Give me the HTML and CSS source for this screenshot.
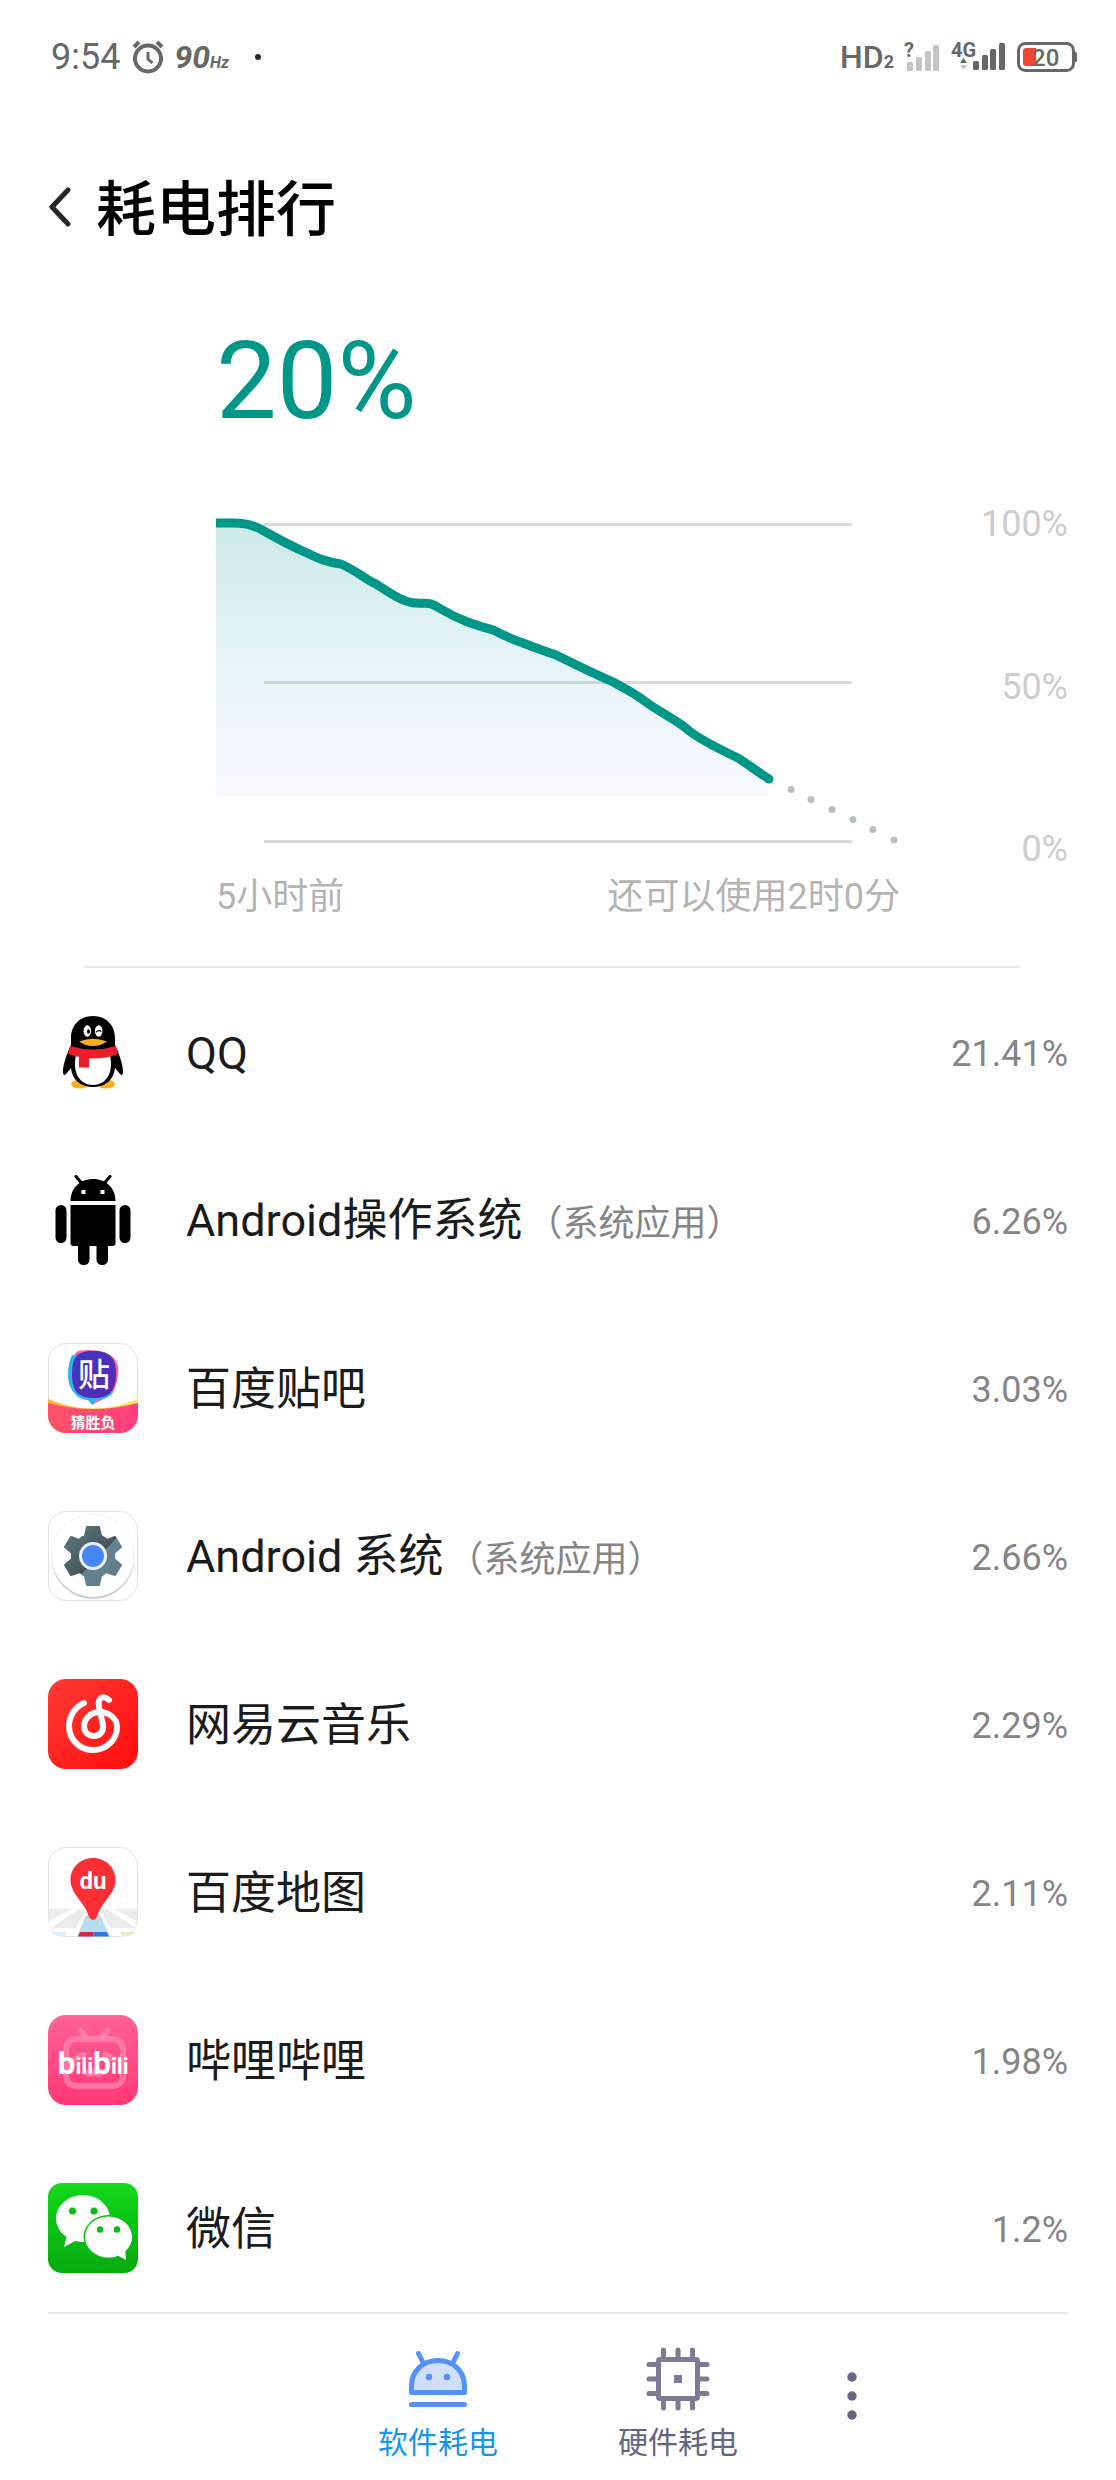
FILE: index.html
```html
<!DOCTYPE html>
<html lang="zh-CN">
<head>
<meta charset="utf-8">
<meta name="viewport" content="width=device-width, initial-scale=1">
<title>耗电排行</title>
<link rel="stylesheet" href="styles.css">
</head>
<body>
<div class="statusbar">
  <div class="status-group status-left">
    <span class="clock">9:54</span>
    <svg class="alarm" width="32" height="34" viewBox="0 0 32 34" aria-hidden="true">
      <g fill="none" stroke="#666865" stroke-linecap="butt">
        <circle cx="16" cy="18.500" r="13" stroke-width="4"/>
        <path d="M16 12v7l4.500 4" stroke-width="3"/>
        <path d="M2 7l5-5M30 7l-5-5" stroke-width="4"/>
      </g>
    </svg>
    <span class="rate">90<small class="rate-unit">Hz</small></span>
    <span class="notice-dot"></span>
  </div>
  <div class="status-group status-right">
    <span class="hd">HD<small class="hd-sim">2</small></span>
    <svg width="38" height="44" viewBox="-2 -6 38 44" aria-hidden="true">
      <g fill="#c5c3c7"><rect x="3" y="21" width="6" height="9" rx="1.500"/><rect x="12" y="16" width="6" height="14" rx="1.500"/><rect x="21" y="10" width="6" height="20" rx="1.500"/><rect x="29" y="4" width="6" height="26" rx="1.500"/></g>
      <text class="glyph-q" x="0" y="16">?</text>
    </svg>
    <svg class="sim2" width="56" height="44" viewBox="-2 -6 56 44" aria-hidden="true">
      <g fill="#666865"><rect x="22" y="20" width="6" height="9" rx="1.500"/><rect x="31" y="14" width="6" height="15" rx="1.500"/><rect x="39" y="8" width="6" height="21" rx="1.500"/><rect x="48" y="2" width="6" height="27" rx="1.500"/><path d="M9 22l3.500-5 3.500 5z"/></g>
      <path d="M9 24l3.500 5 3.500-5z" fill="#c5c3c7"/>
      <text class="glyph-net" x="0" y="16">4G</text>
    </svg>
    <svg class="battery" width="60" height="30" viewBox="0 0 60 30" role="img" aria-label="电量 20%">
      <rect x="1.500" y="1.500" width="55" height="27" rx="7" fill="none" stroke="#666865" stroke-width="3"/>
      <path d="M57 10h1.500q1.500 0 1.500 1.500v7q0 1.500-1.500 1.500H57z" fill="#666865"/>
      <path d="M9 6h10v18H9q-3 0-3-3V9q0-3 3-3z" fill="#f04535"/>
      <text class="glyph-batt" x="15" y="24">20</text>
    </svg>
  </div>
</div>

<header class="titlebar">
  <button class="back" type="button" aria-label="返回">
    <svg width="24" height="40" viewBox="0 0 24 40" aria-hidden="true"><path d="M20 3L4 20l16 17" fill="none" stroke="#252826" stroke-width="5" stroke-linejoin="round" stroke-linecap="round"/></svg>
  </button>
  <h1 class="title">耗电排行</h1>
</header>

<main>
  <section class="usage">
    <p class="level">20%</p>
    <div class="chart">
      <svg class="plot" viewBox="216 501 684 367" role="img" aria-label="电量变化曲线">
        <defs>
          <linearGradient id="fade" x1="0" y1="0" x2="0" y2="1">
            <stop offset="0" stop-color="#009688" stop-opacity=".2"/>
            <stop offset=".45" stop-color="#1a9fb0" stop-opacity=".12"/>
            <stop offset="1" stop-color="#4a90ff" stop-opacity=".04"/>
          </linearGradient>
        </defs>
        <g stroke="#dbdbdc" stroke-width="3"><path d="M264 524.500H852M264 682.500H852M264 841.500H852"/></g>
        <path fill="url(#fade)" d="M216 523H234C252 523 262 530 264 531C287 544 293 547 305 552C319 559 327 562 341 564C359 572 366 580 376 584C394 596 406 603 416 603C428 604 431 602 439 608C461 621 476 625 493 630C507 637 514 640 523 643C538 649 545 651 556 655C580 667 595 674 613 682C630 691 637 695 646 702C658 711 676 720 687 729C697 738 719 749 738 758L768 779V796H216Z"/>
        <path fill="none" stroke="#009688" stroke-width="9" d="M216 523H234C252 523 262 530 264 531C287 544 293 547 305 552C319 559 327 562 341 564C359 572 366 580 376 584C394 596 406 603 416 603C428 604 431 602 439 608C461 621 476 625 493 630C507 637 514 640 523 643C538 649 545 651 556 655C580 667 595 674 613 682C630 691 637 695 646 702C658 711 676 720 687 729C697 738 719 749 738 758C749 765 758 772 769 779"/>
        <circle cx="769" cy="779" r="4.500" fill="#009688"/>
        <g fill="#b4bfc6"><circle cx="791" cy="789.500" r="3.500"/><circle cx="811" cy="799.500" r="3.500"/><circle cx="832" cy="809.500" r="3.500"/><circle cx="853" cy="819.500" r="3.500"/><circle cx="873" cy="829.500" r="3.500"/><circle cx="894" cy="840" r="3.500"/></g>
      </svg>
      <div class="scale"><span>100%</span><span>50%</span><span>0%</span></div>
      <div class="times"><span>5小时前</span><span>还可以使用2时0分</span></div>
    </div>
  </section>

  <ul class="apps">
    <li class="app">
      <svg class="app-icon" viewBox="0 0 90 90" aria-hidden="true">
        <ellipse cx="32" cy="77" rx="9" ry="4.500" fill="#fbb01b"/><ellipse cx="58" cy="77" rx="9" ry="4.500" fill="#fbb01b"/>
        <path d="M45 9C58 9 67 18 67 31V38C70 44 75 57 75 64Q75 70 72 67L67 61C66 73 57 80 45 80S24 73 23 61L18 67Q15 70 15 64C15 57 20 44 23 38V31C23 18 32 9 45 9Z"/>
        <path d="M28 48Q45 53 62 48C66 66 58 78 45 78S24 66 28 48Z" fill="#fff"/>
        <path d="M22 39Q45 46 68 39L70 47Q58 52 41 51.500V60.500H31V50L20 47Z" fill="#ed1c2b"/>
        <ellipse cx="39.300" cy="24" rx="3.800" ry="5.800" fill="#fff"/><ellipse cx="50.700" cy="24" rx="3.800" ry="5.800" fill="#fff"/>
        <ellipse cx="40.500" cy="24.500" rx="1.500" ry="2.200"/><path d="M48 25q3-2.500 5.500-.5" fill="none" stroke="#000" stroke-width="1.200"/>
        <path d="M31 34.500Q45 29 59 34.500Q52 39 45 39T31 34.500Z" fill="#fbb01b"/>
      </svg>
      <span class="app-name">QQ</span><span class="app-share">21.41%</span>
    </li>
    <li class="app">
      <svg class="app-icon" viewBox="0 0 90 90" aria-hidden="true">
        <path d="M22.500 26C22.500 13 32 4 45 4S67.500 13 67.500 26Z"/><path d="M28 1.500l6 7M62 1.500l-6 7" stroke="#000" stroke-width="3" stroke-linecap="round"/>
        <path d="M22.500 30h45v38q0 3-3 3h-39q-3 0-3-3z"/>
        <rect x="7.500" y="30" width="11" height="38" rx="5.500"/><rect x="71.500" y="30" width="11" height="38" rx="5.500"/>
        <rect x="30" y="60" width="11.500" height="30" rx="5.500"/><rect x="48.500" y="60" width="11.500" height="30" rx="5.500"/>
        <path fill="#fff" d="M33.500 15h4v4h-4zM52.500 15h4v4h-4z"/>
      </svg>
      <span class="app-name">Android操作系统<small class="app-kind">（系统应用）</small></span><span class="app-share">6.26%</span>
    </li>
    <li class="app">
      <svg class="app-icon" viewBox="0 0 90 90" aria-hidden="true">
        <defs>
          <linearGradient id="band"><stop offset="0" stop-color="#ff5367"/><stop offset="1" stop-color="#ff3f7c"/></linearGradient>
          <linearGradient id="rim"><stop offset="0" stop-color="#ffae32"/><stop offset=".5" stop-color="#ffcf50"/><stop offset="1" stop-color="#ffe45c"/></linearGradient>
          <linearGradient id="bubble" x1="0" y1="0" x2="1" y2="1"><stop offset="0" stop-color="#3e35c8"/><stop offset="1" stop-color="#5a2ab0"/></linearGradient>
          <clipPath id="tile"><rect width="90" height="90" rx="18"/></clipPath>
        </defs>
        <rect class="tile-edge" x=".5" y=".5" width="89" height="89" rx="18"/>
        <path d="M30 8Q50 5 62 12Q72 18 70 32T63 52L44 62L50 56Q22 57 21 36T30 8Z" fill="#ff5c9a"/>
        <path d="M24 12Q20 20 20 32T28 52Q33 57 40 57L44 62L49 57Q60 56 65 50L40 16Z" fill="#2bb4f2"/>
        <path d="M45 8C62 8 68 15 68 31S62 55 46 55S24 48 24 31S29 8 45 8Z" fill="url(#bubble)"/>
        <g clip-path="url(#tile)"><path d="M0 56Q45 75 90 56V90H0Z" fill="url(#rim)"/><path d="M0 60Q45 72 90 60V90H0Z" fill="url(#band)"/></g>
        <text class="logo-tie" x="46" y="43">贴</text><text class="logo-band" x="45" y="85">猜胜负</text>
      </svg>
      <span class="app-name">百度贴吧</span><span class="app-share">3.03%</span>
    </li>
    <li class="app">
      <svg class="app-icon" viewBox="0 0 90 90" aria-hidden="true">
        <defs>
          <linearGradient id="steel" x1="0" y1="0" x2="1" y2="1"><stop offset="0" stop-color="#607b80"/><stop offset=".55" stop-color="#435559"/><stop offset=".56" stop-color="#668390"/><stop offset="1" stop-color="#5c7887"/></linearGradient>
        </defs>
        <rect class="tile-edge" x=".5" y=".5" width="89" height="89" rx="18"/>
        <circle cx="45" cy="46.500" r="41.500" fill="#cbc4cb"/><circle cx="45" cy="44.500" r="41.500" fill="#fff" stroke="#eee" stroke-width=".7"/>
        <path fill="url(#steel)" stroke="url(#steel)" stroke-width="2" stroke-linejoin="round" d="M39 16H51L53 25Q57 27 59 29L67 26L73 36L66 42V48L73 54L67 64L58 61Q56 63 53 65L51 74H39L37 65Q34 63 32 61L23 64L17 54L24 48V42L17 36L23 26L31 29Q34 26 37 25Z"/>
        <circle cx="45" cy="45" r="12.500" fill="#4587f5" stroke="#e9f0fb" stroke-width="3"/>
      </svg>
      <span class="app-name">Android 系统<small class="app-kind">（系统应用）</small></span><span class="app-share">2.66%</span>
    </li>
    <li class="app">
      <svg class="app-icon" viewBox="0 0 90 90" aria-hidden="true">
        <defs><linearGradient id="netease" x1="0" y1="0" x2="1" y2="1"><stop offset="0" stop-color="#ff3a34"/><stop offset="1" stop-color="#ff0d0d"/></linearGradient></defs>
        <rect width="90" height="90" rx="18" fill="url(#netease)"/>
        <path d="M36 24C27 28 21 37 21 47C21 61 32 71 45 71S69 61 69 48C69 39 60 32 50 33C42 34 36 40 36 47C36 53 40 57 46 57S56 52 55 46L51 28C49 18 56 16 61 21" fill="none" stroke="#fff" stroke-width="6" stroke-linecap="round" stroke-linejoin="round"/>
      </svg>
      <span class="app-name">网易云音乐</span><span class="app-share">2.29%</span>
    </li>
    <li class="app">
      <svg class="app-icon" viewBox="0 0 90 90" aria-hidden="true">
        <rect class="tile-edge" x=".5" y=".5" width="89" height="89" rx="18"/>
        <path d="M1 62H24L1 74ZM31 62H38L28 81H3ZM89 62H66L89 74ZM59 62H52L62 81H87Z" fill="#ebebeb"/>
        <path d="M3 85H19L17 89H12Q6 89 3 85Z" fill="#d9eff8"/><path d="M72 85H87Q84 89 78 89H74Z" fill="#e3efc9"/>
        <path d="M38 68H52L62 89.500H29Z" fill="#b7dded"/><path d="M32 85H45.500V89.500H30Z" fill="#d22845"/><path d="M45.500 85H59L61 89.500H45.500Z" fill="#2e79e4"/>
        <path d="M45 11C58 11 67.500 21 67.500 33C67.500 47 53 55 49 70Q45 76 41 70C37 55 22.500 47 22.500 33C22.500 21 32 11 45 11Z" fill="#f92f33"/>
        <text class="logo-du" x="45" y="42">du</text>
      </svg>
      <span class="app-name">百度地图</span><span class="app-share">2.11%</span>
    </li>
    <li class="app">
      <svg class="app-icon" viewBox="0 0 90 90" aria-hidden="true">
        <defs><linearGradient id="bili" x1="0" y1="0" x2="0" y2="1"><stop offset="0" stop-color="#ff6296"/><stop offset="1" stop-color="#ff3874"/></linearGradient></defs>
        <rect width="90" height="90" rx="18" fill="url(#bili)"/>
        <g fill="none" stroke="#ff8fb3" stroke-opacity=".65" stroke-width="6" stroke-linecap="round"><rect x="18" y="24" width="57" height="47" rx="10"/><path d="M33 16l4 5M59 16l-4 5M27 44l9-4M57 40l9 4M38 57q4 4 8 0q4 4 8 0"/></g>
        <text class="logo-bili" x="45" y="59"><tspan class="logo-b">b</tspan>ili<tspan class="logo-b">b</tspan>ili</text>
      </svg>
      <span class="app-name">哔哩哔哩</span><span class="app-share">1.98%</span>
    </li>
    <li class="app">
      <svg class="app-icon" viewBox="0 0 90 90" aria-hidden="true">
        <defs><linearGradient id="wechat" x1="0" y1="0" x2="0" y2="1"><stop offset="0" stop-color="#14d81c"/><stop offset="1" stop-color="#04aa0c"/></linearGradient></defs>
        <rect width="90" height="90" rx="14" fill="url(#wechat)"/>
        <ellipse cx="35" cy="35.500" rx="27" ry="23.500" fill="#fff"/><path d="M19 52L16 64L29 57Z" fill="#fff"/>
        <ellipse cx="60.500" cy="54" rx="25" ry="22" fill="#0abf12"/><ellipse cx="60.500" cy="54" rx="23.500" ry="20.500" fill="#fff"/><path d="M77 65L78 77L67 71Z" fill="#fff"/>
        <g fill="#0cbd14"><circle cx="24.500" cy="28" r="3.600"/><circle cx="46" cy="28" r="3.600"/><circle cx="52" cy="46.500" r="3.200"/><circle cx="69" cy="46.500" r="3.200"/></g>
      </svg>
      <span class="app-name">微信</span><span class="app-share">1.2%</span>
    </li>
  </ul>
</main>

<nav class="tabs">
  <button class="tab tab-active" type="button" aria-current="page">
    <svg width="64" height="64" viewBox="0 0 64 64" aria-hidden="true">
      <path d="M5.500 45.500V39C5.500 24 17 13.500 32 13.500S58.500 24 58.500 39V45.500Z" fill="#d0dffe" stroke="#5591f6" stroke-width="5" stroke-linejoin="round"/>
      <path d="M12.500 6.500l5 10M51.500 6.500l-5 10M5.500 57.500h53" stroke="#5591f6" stroke-width="5" stroke-linecap="round"/>
      <g fill="#5591f6"><circle cx="23" cy="30" r="3.200"/><circle cx="41" cy="30" r="3.200"/></g>
    </svg>
    <span>软件耗电</span>
  </button>
  <button class="tab" type="button">
    <svg width="64" height="64" viewBox="0 0 64 64" aria-hidden="true">
      <rect x="12.500" y="12.500" width="39" height="39" rx="1.500" fill="none" stroke="#7c7d94" stroke-width="5"/>
      <path d="M17.500 3v8M32 3v8M46.500 3v8M17.500 53v8M32 53v8M46.500 53v8M3 17.500h8M3 32h8M3 46.500h8M53 17.500h8M53 32h8M53 46.500h8" stroke="#7c7d94" stroke-width="5" stroke-linecap="round"/>
      <rect x="28" y="28" width="8" height="8" fill="#7c7d94"/>
    </svg>
    <span>硬件耗电</span>
  </button>
  <button class="tab more" type="button" aria-label="更多">
    <svg width="12" height="50" viewBox="0 0 12 50" aria-hidden="true"><g fill="#656682"><circle cx="6" cy="6" r="4.700"/><circle cx="6" cy="25" r="4.700"/><circle cx="6" cy="44" r="4.700"/></g></svg>
  </button>
</nav>
</body>
</html>
```
FILE: styles.css
```css
* {
  box-sizing: border-box;
}

body {
  margin: 0;
  background: #fefefe;
  color: #1a1b1b;
  font-family: Roboto, "Noto Sans CJK SC", sans-serif;
}

svg {
  display: block;
  flex: none;
}

button {
  padding: 0;
  border: 0;
  background: none;
  color: inherit;
  font: inherit;
}

/* Status bar */
.statusbar {
  display: flex;
  justify-content: space-between;
  height: 112px;
  padding: 2px 39px 0 51px;
  color: #666865;
}

.status-group {
  display: flex;
  align-items: center;
}

.clock {
  margin-right: 12px;
  font-size: 36px;
}

.rate {
  margin-left: 10px;
  font-size: 32px;
  font-style: italic;
  font-weight: 700;
}

.rate-unit {
  font-size: 16px;
}

.notice-dot {
  width: 6px;
  height: 6px;
  margin-left: 26px;
  border-radius: 50%;
  background: #252826;
}

.hd {
  margin-right: 8px;
  font-size: 32px;
  font-weight: 500;
}

.hd-sim {
  font-size: 18px;
  font-weight: 700;
}

.sim2 {
  margin: 0 12px 0 9px;
}

.glyph-q,
.glyph-net,
.glyph-batt {
  fill: #666865;
  font-size: 20px;
  font-weight: 700;
}

.glyph-batt {
  font-size: 24px;
  font-weight: 500;
}

/* Title */
.titlebar {
  display: flex;
  align-items: center;
  gap: 24px;
  height: 190px;
  padding: 0 48px;
}

.title {
  margin: 0;
  padding-bottom: 4px;
  color: #000;
  font-family: "Noto Sans CJK SC", sans-serif;
  font-size: 60px;
  font-weight: 500;
  line-height: 72px;
}

/* Battery level and chart */
.usage {
  padding: 15px 48px 40px 216px;
}

.level {
  margin: 0 0 56px;
  color: #009688;
  font-size: 108px;
  line-height: 128px;
}

.chart {
  display: grid;
  grid-template-columns: 1fr 168px;
  font-size: 36px;
}

.plot {
  width: 100%;
}

.scale {
  display: flex;
  flex-direction: column;
  justify-content: space-between;
  margin: 2px 0 -2px;
  color: #cecccd;
  line-height: 42px;
  text-align: right;
}

.times {
  display: flex;
  justify-content: space-between;
  color: #b5b4b4;
  line-height: 58px;
}

/* App list */
.apps {
  margin: 0;
  padding: 0;
  list-style: none;
}

.apps::before {
  display: block;
  height: 2px;
  margin: 0 96px 0 84px;
  background: #e6e6e8;
  content: "";
}

.app {
  display: flex;
  align-items: center;
  height: 168px;
  padding: 0 48px;
}

.app-icon {
  width: 90px;
  height: 90px;
  margin-right: 48px;
}

.tile-edge {
  fill: #fff;
  stroke: #e2e2e2;
}

.app-name {
  flex: 1;
  padding-top: 4px;
  font-size: 45px;
  line-height: 60px;
}

.app-kind {
  margin-left: 4px;
  color: #858585;
  font-size: 36px;
}

.app-share {
  padding-top: 4px;
  color: #858585;
  font-size: 36px;
}

.logo-tie,
.logo-band,
.logo-du,
.logo-bili {
  fill: #fff;
  font-size: 32px;
  font-weight: 700;
  text-anchor: middle;
}

.logo-tie {
  font-weight: 500;
}

.logo-band {
  font-size: 15px;
}

.logo-du {
  font-size: 24px;
}

.logo-bili {
  font-size: 22px;
}

.logo-b {
  font-size: 32px;
}

/* Bottom tabs */
.tabs {
  display: grid;
  grid-template-columns: 240px 240px 108px;
  justify-content: center;
  margin: 0 48px;
  padding: 33px 0 17px 108px;
  border-top: 2px solid #e6e6e8;
  color: #63647e;
}

.tab {
  display: flex;
  flex-direction: column;
  align-items: center;
  gap: 12px;
  font-size: 30px;
  line-height: 40px;
}

.tab-active {
  color: #1596ee;
}

.more {
  justify-content: center;
  padding-bottom: 18px;
}
```
